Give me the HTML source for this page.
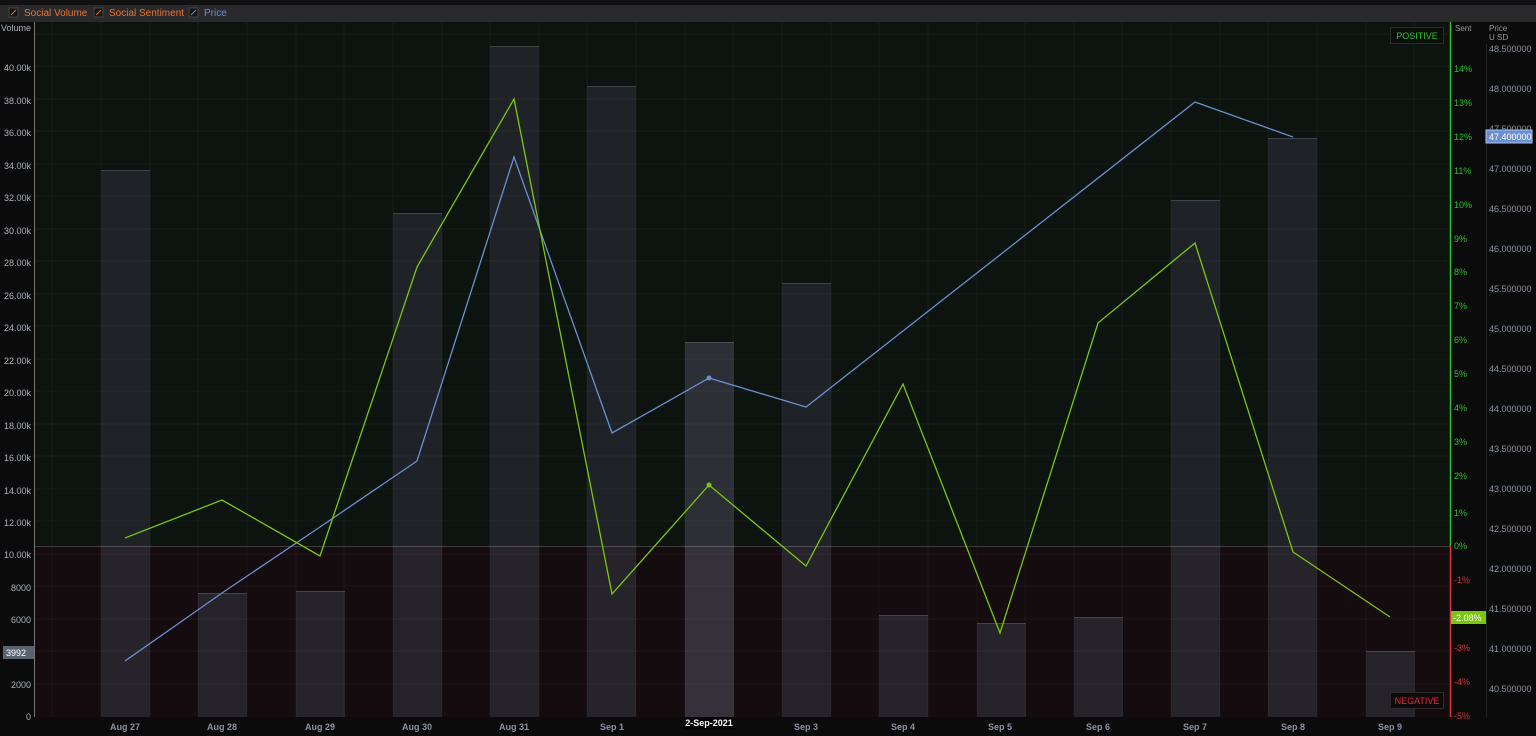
<!DOCTYPE html>
<html><head><meta charset="utf-8"><style>
html,body{margin:0;padding:0;background:#0b0b0b;width:1536px;height:736px;overflow:hidden;font-family:"Liberation Sans",sans-serif}
</style></head><body>
<svg width="1536" height="736" xmlns="http://www.w3.org/2000/svg" font-family="Liberation Sans, sans-serif">
<defs>
<clipPath id="up"><rect x="0" y="0" width="1536" height="546"/></clipPath>
<clipPath id="dn"><rect x="0" y="546" width="1536" height="190"/></clipPath>
</defs>
<rect width="1536" height="736" fill="#0b0b0b"/>
<rect x="0" y="0" width="1536" height="5" fill="#111"/>
<rect x="0" y="5" width="1536" height="17" fill="#2a2a2d"/>
<g font-size="10">
<rect x="9" y="8" width="9" height="9" fill="#151515" stroke="#444"/><path d="M11 15 L16 10" stroke="#e07030"/>
<text x="24" y="16" fill="#e8742e">Social Volume</text>
<rect x="94" y="8" width="9" height="9" fill="#151515" stroke="#444"/><path d="M96 15 L101 10" stroke="#e07030"/>
<text x="109" y="16" fill="#e8742e">Social Sentiment</text>
<rect x="189" y="8" width="9" height="9" fill="#151515" stroke="#444"/><path d="M191 15 L196 10" stroke="#6b8fd0"/>
<text x="204" y="16" fill="#6b8fd0">Price</text>
</g>
<rect x="35" y="22" width="1415" height="524" fill="#0d130f"/>
<rect x="35" y="546" width="1415" height="171" fill="#150c0f"/>
<g id="bars">
<g clip-path="url(#up)" fill="#1f2327">
<rect x="101" y="170" width="49" height="547"/>
<rect x="198" y="593" width="49" height="124"/>
<rect x="296" y="591" width="49" height="126"/>
<rect x="393" y="213" width="49" height="504"/>
<rect x="490" y="46" width="49" height="671"/>
<rect x="587" y="86" width="49" height="631"/>
<rect x="782" y="283" width="49" height="434"/>
<rect x="1171" y="200" width="49" height="517"/>
<rect x="1268" y="138" width="49" height="579"/>
<rect x="685" y="342" width="49" height="375" fill="#2c2f35"/>
</g>
<g clip-path="url(#dn)" fill="#27232a">
<rect x="101" y="170" width="49" height="547"/>
<rect x="198" y="593" width="49" height="124"/>
<rect x="296" y="591" width="49" height="126"/>
<rect x="393" y="213" width="49" height="504"/>
<rect x="490" y="46" width="49" height="671"/>
<rect x="587" y="86" width="49" height="631"/>
<rect x="782" y="283" width="49" height="434"/>
<rect x="879" y="615" width="49" height="102"/>
<rect x="977" y="623" width="49" height="94"/>
<rect x="1074" y="617" width="49" height="100"/>
<rect x="1171" y="200" width="49" height="517"/>
<rect x="1268" y="138" width="49" height="579"/>
<rect x="1366" y="651" width="49" height="66"/>
<rect x="685" y="342" width="49" height="375" fill="#34313b"/>
</g>
</g>
<g stroke="#ffffff" stroke-opacity="0.04" stroke-width="1">
<path d="M52 22V717M101 22V717M150 22V717M198 22V717M247 22V717M296 22V717M344 22V717M393 22V717M442 22V717M490 22V717M539 22V717M587 22V717M636 22V717M685 22V717M733 22V717M782 22V717M831 22V717M879 22V717M928 22V717M977 22V717M1025 22V717M1074 22V717M1122 22V717M1171 22V717M1220 22V717M1268 22V717M1317 22V717M1366 22V717M1414 22V717"/>
<path d="M35 684H1450M35 651H1450M35 619H1450M35 586H1450M35 554H1450M35 521H1450M35 489H1450M35 456H1450M35 424H1450M35 391H1450M35 359H1450M35 326H1450M35 294H1450M35 261H1450M35 229H1450M35 196H1450M35 164H1450M35 131H1450M35 99H1450M35 66H1450M35 34H1450"/>
</g>
<g stroke="#ffffff" stroke-opacity="0.15">
<path d="M101 170.5h49M198 593.5h49M296 591.5h49M393 213.5h49M490 46.5h49M587 86.5h49M685 342.5h49M782 283.5h49M879 615.5h49M977 623.5h49M1074 617.5h49M1171 200.5h49M1268 138.5h49M1366 651.5h49"/>
</g>
<line x1="35" y1="546.5" x2="1450" y2="546.5" stroke="#ffffff" stroke-opacity="0.2"/>
<polyline fill="none" stroke="#6b8fd0" stroke-width="1.3" points="125,661 222,593 320,527 417,461 514,157 612,433 709,378 806,407 1195,102 1293,137"/>
<polyline fill="none" stroke="#7ac70f" stroke-width="1.3" points="125,538 222,500 320,556 417,267 514,99 612,594 709,485 806,566 903,384 1000,633 1098,323 1195,243 1293,552 1390,617"/>
<circle cx="709" cy="378" r="2.5" fill="#6b8fd0"/>
<circle cx="709" cy="485" r="2.5" fill="#7ac70f"/>
<rect x="1390.5" y="27.5" width="53" height="16" fill="#0b0e0b" stroke="#2a2a2a"/>
<text x="1417" y="39" font-size="9" fill="#2ec02e" text-anchor="middle">POSITIVE</text>
<rect x="1390.5" y="692.5" width="53" height="16" fill="#0e0a0b" stroke="#2a2a2a"/>
<text x="1417" y="704" font-size="9" fill="#e0303a" text-anchor="middle">NEGATIVE</text>
<line x1="34.5" y1="22" x2="34.5" y2="717" stroke="#777"/>
<g font-size="9" fill="#aab0bb" text-anchor="end">
<text x="31" y="31">Volume</text>
<text x="31" y="71">40.00k</text><text x="31" y="104">38.00k</text><text x="31" y="136">36.00k</text><text x="31" y="169">34.00k</text><text x="31" y="201">32.00k</text><text x="31" y="234">30.00k</text><text x="31" y="266">28.00k</text><text x="31" y="299">26.00k</text><text x="31" y="331">24.00k</text><text x="31" y="364">22.00k</text><text x="31" y="396">20.00k</text><text x="31" y="429">18.00k</text><text x="31" y="461">16.00k</text><text x="31" y="494">14.00k</text><text x="31" y="526">12.00k</text><text x="31" y="558">10.00k</text><text x="31" y="591">8000</text><text x="31" y="623">6000</text><text x="31" y="688">2000</text><text x="31" y="720">0</text>
</g>
<rect x="3" y="646" width="31" height="13" fill="#5a6470"/>
<text x="6" y="656" font-size="9" fill="#fff">3992</text>
<line x1="1450.5" y1="22" x2="1450.5" y2="546" stroke="#2ec02e" stroke-width="1.5"/>
<line x1="1450.5" y1="546" x2="1450.5" y2="717" stroke="#e0303a" stroke-width="1.5"/>
<text x="1455" y="31" font-size="8" fill="#999">Sent</text>
<g font-size="9" fill="#2ec02e">
<text x="1454" y="72">14%</text><text x="1454" y="106">13%</text><text x="1454" y="140">12%</text><text x="1454" y="174">11%</text><text x="1454" y="208">10%</text><text x="1454" y="242">9%</text><text x="1454" y="275">8%</text><text x="1454" y="309">7%</text><text x="1454" y="343">6%</text><text x="1454" y="377">5%</text><text x="1454" y="411">4%</text><text x="1454" y="445">3%</text><text x="1454" y="479">2%</text><text x="1454" y="516">1%</text><text x="1454" y="549">0%</text>
</g>
<g font-size="9" fill="#e0303a">
<text x="1454" y="583">-1%</text><text x="1454" y="651">-3%</text><text x="1454" y="685">-4%</text><text x="1454" y="719">-5%</text>
</g>
<rect x="1451" y="611" width="35" height="13" fill="#7ac70f"/>
<text x="1453" y="621" font-size="9" fill="#fff">-2.08%</text>
<line x1="1486.5" y1="44" x2="1486.5" y2="717" stroke="#222"/>
<text x="1489" y="31" font-size="8" fill="#999">Price</text>
<text x="1489" y="40" font-size="8" fill="#999">U SD</text>
<g font-size="9" fill="#8a92a0">
<text x="1489" y="52">48.500000</text><text x="1489" y="92">48.000000</text><text x="1489" y="132">47.500000</text><text x="1489" y="172">47.000000</text><text x="1489" y="212">46.500000</text><text x="1489" y="252">46.000000</text><text x="1489" y="292">45.500000</text><text x="1489" y="332">45.000000</text><text x="1489" y="372">44.500000</text><text x="1489" y="412">44.000000</text><text x="1489" y="452">43.500000</text><text x="1489" y="492">43.000000</text><text x="1489" y="532">42.500000</text><text x="1489" y="572">42.000000</text><text x="1489" y="612">41.500000</text><text x="1489" y="652">41.000000</text><text x="1489" y="692">40.500000</text>
</g>
<rect x="1486" y="130" width="46" height="13" fill="#6b8fd0" stroke="#aac0f0"/>
<text x="1489" y="140" font-size="9" fill="#fff">47.400000</text>
<g font-size="9" font-weight="bold" fill="#8a92a0" text-anchor="middle">
<text x="125" y="730">Aug 27</text><text x="222" y="730">Aug 28</text><text x="320" y="730">Aug 29</text><text x="417" y="730">Aug 30</text><text x="514" y="730">Aug 31</text><text x="612" y="730">Sep 1</text><text x="806" y="730">Sep 3</text><text x="903" y="730">Sep 4</text><text x="1000" y="730">Sep 5</text><text x="1098" y="730">Sep 6</text><text x="1195" y="730">Sep 7</text><text x="1293" y="730">Sep 8</text><text x="1390" y="730">Sep 9</text>
</g>
<rect x="684" y="717" width="50" height="12" fill="#050505"/>
<text x="709" y="726" font-size="9" font-weight="bold" fill="#fff" text-anchor="middle">2-Sep-2021</text>
</svg>
</body></html>
